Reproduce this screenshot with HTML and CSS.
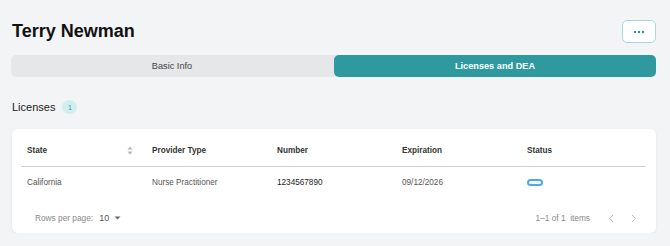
FILE: index.html
```html
<!DOCTYPE html>
<html lang="en">
<head>
  <meta charset="UTF-8">
  <title>Terry Newman</title>
  <link rel="stylesheet" href="styles.css">
</head>
<body>
  <div class="page">
    <div class="top">
      <h1 class="name">Terry Newman</h1>
      <button class="more" type="button">
        <svg width="12" height="4" viewBox="0 0 12 4"><circle cx="2" cy="2" r="1.2" fill="#2d8f96"/><circle cx="6" cy="2" r="1.2" fill="#2d8f96"/><circle cx="10" cy="2" r="1.2" fill="#2d8f96"/></svg>
      </button>
    </div>

    <div class="tabs">
      <div class="tab">Basic Info</div>
      <div class="tab active">Licenses and DEA</div>
    </div>

    <div class="section-title">
      <span>Licenses</span>
      <span class="count">1</span>
    </div>

    <div class="card">
      <table class="grid">
        <thead>
          <tr>
            <th>
              <div class="th-sort">State
                <svg width="6" height="9" viewBox="0 0 6 9"><path d="M3 0.5 L5.5 3.5 H0.5 Z" fill="#b4b4b4"/><path d="M3 8.5 L5.5 5.5 H0.5 Z" fill="#b4b4b4"/></svg>
              </div>
            </th>
            <th>Provider Type</th>
            <th>Number</th>
            <th>Expiration</th>
            <th>Status</th>
          </tr>
        </thead>
        <tbody>
          <tr>
            <td>California</td>
            <td>Nurse Practitioner</td>
            <td class="dark">1234567890</td>
            <td>09/12/2026</td>
            <td><span class="status"></span></td>
          </tr>
        </tbody>
      </table>

      <div class="pager">
        <div class="rows">
          Rows per page:
          <span class="size">10</span>
          <svg width="7" height="4" viewBox="0 0 7 4"><path d="M0.5 0.5 H6.5 L3.5 3.5 Z" fill="#666"/></svg>
        </div>
        <div class="nav">
          <span>1–1 of 1&nbsp; items</span>
          <svg class="chev" width="6" height="9" viewBox="0 0 6 9"><path d="M5 1 L1.5 4.5 L5 8" fill="none" stroke="#bbb" stroke-width="1"/></svg>
          <svg class="chev" width="6" height="9" viewBox="0 0 6 9"><path d="M1 1 L4.5 4.5 L1 8" fill="none" stroke="#bbb" stroke-width="1"/></svg>
        </div>
      </div>
    </div>
  </div>
</body>
</html>
```

FILE: styles.css
```css
body { margin: 0; background: #f3f4f6; font-family: "Liberation Sans", Arial, sans-serif; color: #333; }
.page { padding: 20px 14px 0 11px; }

.top { display: flex; justify-content: space-between; align-items: center; height: 23px; }
.name { margin: 0 0 0 1px; font-size: 18px; font-weight: bold; color: #111; }
.more { width: 34px; height: 23px; padding: 0; background: #fff; border: 1px solid #a6d8db; border-radius: 5px; display: flex; align-items: center; justify-content: center; }

.tabs { display: flex; margin-top: 12px; height: 22px; background: #e6e7e9; border-radius: 5px; }
.tab { flex: 1; display: flex; align-items: center; justify-content: center; font-size: 9.2px; color: #444; }
.tab.active { background: #2e9aa0; color: #fff; font-weight: bold; border-radius: 5px; margin-left: 1px; }

.section-title { display: flex; align-items: center; gap: 7px; margin: 23px 0 0 1px; height: 14px; font-size: 11px; color: #1a1a1a; }
.count { width: 15px; height: 14px; border-radius: 7px; background: #d3eeee; color: #2e9aa0; font-size: 7px; display: flex; align-items: center; justify-content: center; }

.card { margin: 15px 0 0 1px; background: #fff; border-radius: 6px; box-shadow: 0 1px 3px rgba(0,0,0,0.07); padding: 5px 10px 0 9px; height: 99px; }

.grid { width: 625px; border-collapse: collapse; table-layout: fixed; font-size: 8.2px; }
.grid th { height: 32px; padding: 0 6px; text-align: left; font-weight: bold; color: #333; border-bottom: 1px solid #cfcfcf; }
.grid td { height: 30px; padding: 0 6px; color: #555; }
.grid td.dark { color: #222; }
.th-sort { display: flex; align-items: center; justify-content: space-between; padding-right: 7px; }

.status { display: inline-block; width: 12px; height: 3px; border: 2px solid #4da9ee; border-radius: 4px; vertical-align: middle; }

.pager { display: flex; justify-content: space-between; align-items: center; height: 30px; margin-top: 6px; font-size: 8.3px; color: #888; }
.rows { display: flex; align-items: center; padding-left: 14px; }
.size { margin-left: 6px; margin-right: 5px; font-size: 9px; color: #555; }
.nav { display: flex; align-items: center; padding-right: 9px; }
.chev { margin-left: 18px; }
.chev + .chev { margin-left: 17px; }
```
